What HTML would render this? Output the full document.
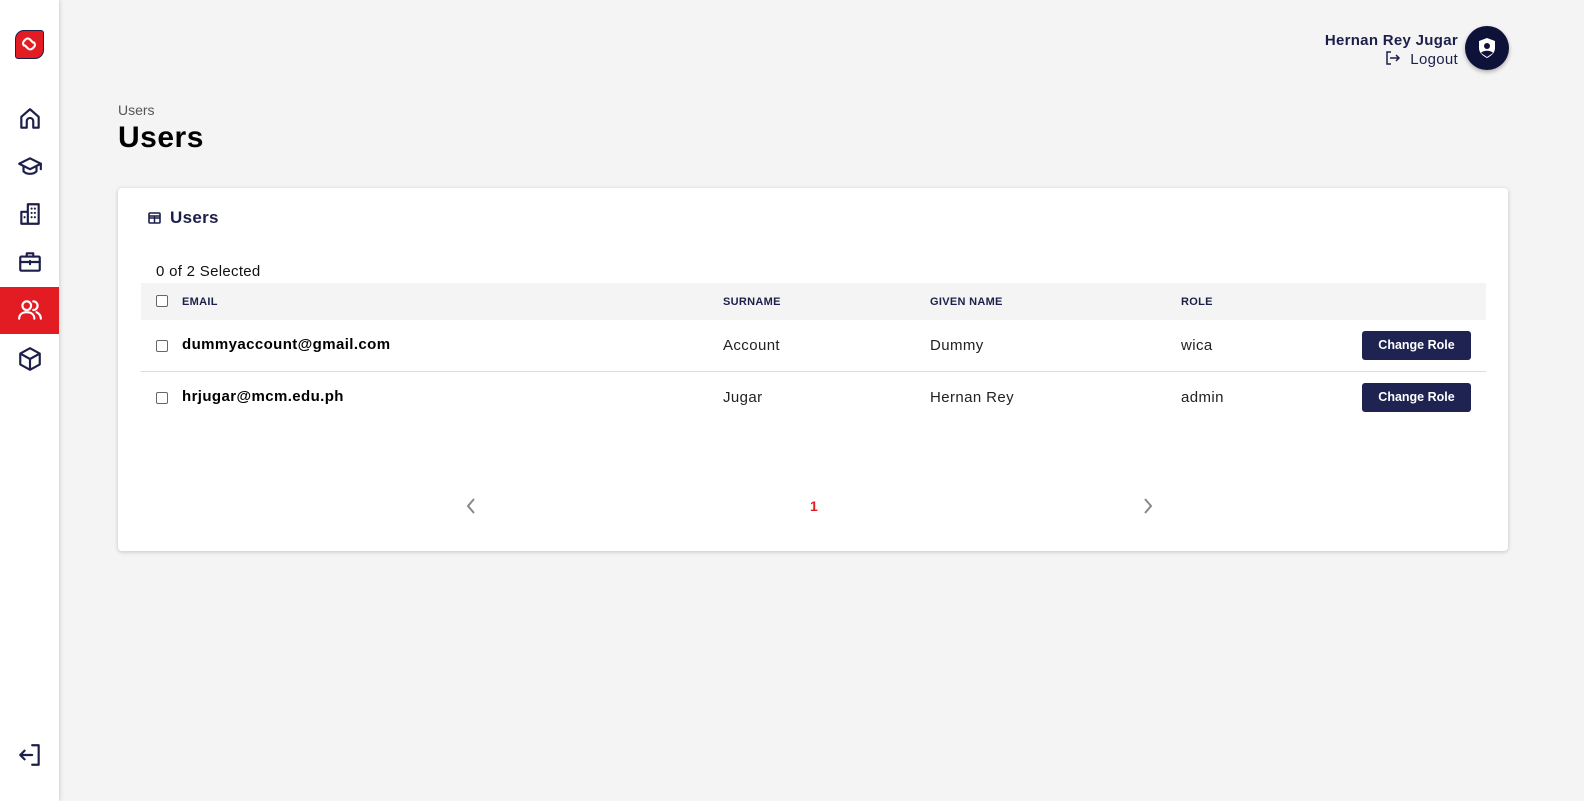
<!DOCTYPE html>
<html><head><meta charset="utf-8"><style>
*{box-sizing:border-box;margin:0;padding:0}
body{width:1584px;height:801px;background:#f4f4f4;font-family:"Liberation Sans",sans-serif;position:relative;overflow:hidden;color:#111}
.side{position:absolute;left:0;top:0;width:59px;height:801px;background:#fff;box-shadow:1px 0 4px rgba(0,0,0,.15)}
.ic{position:absolute;left:17px;width:26px;height:26px}
.ic svg{width:26px;height:26px;fill:none;stroke:#1c1f4a;stroke-width:2;stroke-linecap:round;stroke-linejoin:round}
.act{position:absolute;left:0;top:287px;width:59px;height:47px;background:#e31b23}
.card{position:absolute;left:118px;top:188px;width:1390px;height:363px;background:#fff;border-radius:4px;box-shadow:0 1px 4px rgba(0,0,0,.2)}
.th{position:absolute;top:296px;font-size:11px;font-weight:bold;color:#1c1f4a;letter-spacing:.3px}
.cb{position:absolute;left:156px;width:12px;height:12px;border:1.3px solid #666;border-radius:2px;background:#fff}
.cell{position:absolute;font-size:15px;color:#222;letter-spacing:.4px}
.btn{position:absolute;left:1362px;width:109px;height:29px;background:#1e2352;color:#fff;font-size:12.5px;font-weight:bold;border-radius:3px;text-align:center;line-height:29px}
</style></head><body>
<div class="side">
  <div style="position:absolute;left:15px;top:30px;width:29px;height:29px;background:#e31b23;border-radius:9px 3px 9px 3px;border:1.5px solid #1c1f4a"><svg width="26" height="26" viewBox="0 0 26 26" style="position:absolute;left:0;top:0"><g fill="none" stroke="#fff" stroke-width="2.2" stroke-linecap="round"><path d="M8 14.5 a3.2 3.2 0 0 1 0-4.5 l1.5-1.5 a3.2 3.2 0 0 1 4.5 0 L17 11.5"/><path d="M18 11.5 a3.2 3.2 0 0 1 0 4.5 l-1.5 1.5 a3.2 3.2 0 0 1 -4.5 0 L9 14.5"/></g></svg></div>
  <div class="ic" style="top:106px"><svg viewBox="0 0 24 24"><path d="M4 10 L12 3 L20 10 V20 H15 V14 a3 3 0 0 0 -6 0 V20 H4 Z"/></svg></div>
  <div class="ic" style="top:154px"><svg viewBox="0 0 24 24"><path d="M2 9 L12 4 L22 9 L12 14 Z"/><path d="M6 11 V16 c3 3 9 3 12 0 V11"/><path d="M22 9 V14"/></svg></div>
  <div class="ic" style="top:201px"><svg viewBox="0 0 24 24"><path d="M10 21 V3 H20 V21 Z M4 21 V10 H10 M4 21 H20"/><path d="M13.5 7h0M16.5 7h0M13.5 11h0M16.5 11h0M13.5 15h0M16.5 15h0M7 15h0"/></svg></div>
  <div class="ic" style="top:249px"><svg viewBox="0 0 24 24"><rect x="3" y="7" width="18" height="13" rx="1"/><path d="M9 7 V4 H15 V7 M3 12 H21 M12 11v3"/></svg></div>
  <div class="act"></div>
  <div class="ic" style="top:297px"><svg viewBox="0 0 24 24" style="stroke:#fff"><circle cx="9" cy="8" r="4"/><path d="M2 20 c0-4 3-6 7-6 s7 2 7 6"/><path d="M15 4 a4 4 0 0 1 0 8 M18 14 c2 1 4 3 4 6"/></svg></div>
  <div class="ic" style="top:346px"><svg viewBox="0 0 24 24"><path d="M12 2 L21 7 V17 L12 22 L3 17 V7 Z M3 7 L12 12 L21 7 M12 12 V22"/></svg></div>
  <div class="ic" style="top:742px"><svg viewBox="0 0 24 24"><path d="M14 3 H20 V21 H14 M3 12 H14 M7 8 L3 12 L7 16"/></svg></div>
</div>
<div style="position:absolute;right:126px;top:32px;font-size:15px;font-weight:bold;color:#1c1f4a;letter-spacing:.3px">Hernan Rey Jugar</div>
<div style="position:absolute;right:126px;top:50px;font-size:15px;color:#1c1f4a;letter-spacing:.3px"><svg width="16" height="16" viewBox="0 0 16 16" style="vertical-align:-2px"><path d="M6 2H2V14H6M5 8H14M11 5L14 8L11 11" fill="none" stroke="#1c1f4a" stroke-width="1.5"/></svg>&nbsp; Logout</div>
<div style="position:absolute;left:1465px;top:26px;width:44px;height:44px;border-radius:50%;background:#0f1238;box-shadow:0 2px 4px rgba(0,0,0,.3)"><svg width="44" height="44" viewBox="0 0 44 44"><path d="M22 12 L30 15 V22 c0 5-4 8-8 10 c-4-2-8-5-8-10 V15 Z" fill="#fff"/><circle cx="22" cy="20" r="3" fill="#0f1238"/><path d="M16 27 c2-3 10-3 12 0 l-6 4 Z" fill="#0f1238"/></svg></div>
<div style="position:absolute;left:118px;top:102px;font-size:14px;color:#555">Users</div>
<div style="position:absolute;left:118px;top:121px;font-size:30px;font-weight:bold;color:#000;letter-spacing:.5px">Users</div>
<div class="card"></div>
<svg style="position:absolute;left:148px;top:212px" width="13" height="12" viewBox="0 0 13 12"><rect x="1" y="1" width="11" height="10" rx="1" fill="none" stroke="#1c1f4a" stroke-width="1.6"/><path d="M1 6H12M6.5 4V11M1 4H12" stroke="#1c1f4a" stroke-width="1.5"/></svg>
<div style="position:absolute;left:170px;top:208px;font-size:17px;font-weight:bold;color:#1c1f4a;letter-spacing:.3px">Users</div>
<div style="position:absolute;left:156px;top:263px;font-size:15px;color:#111;letter-spacing:.3px">0 of 2 Selected</div>
<div style="position:absolute;left:141px;top:283px;width:1345px;height:37px;background:#f4f4f4"></div>
<div class="cb" style="top:295px"></div>
<div class="th" style="left:182px">EMAIL</div>
<div class="th" style="left:723px">SURNAME</div>
<div class="th" style="left:930px">GIVEN NAME</div>
<div class="th" style="left:1181px">ROLE</div>
<div class="cb" style="top:340px"></div>
<div class="cell" style="left:182px;top:336px;font-weight:bold;color:#000">dummyaccount@gmail.com</div>
<div class="cell" style="left:723px;top:337px">Account</div>
<div class="cell" style="left:930px;top:337px">Dummy</div>
<div class="cell" style="left:1181px;top:337px">wica</div>
<div class="btn" style="top:331px">Change Role</div>
<div style="position:absolute;left:141px;top:371px;width:1345px;height:1px;background:#ddd"></div>
<div class="cb" style="top:392px"></div>
<div class="cell" style="left:182px;top:388px;font-weight:bold;color:#000">hrjugar@mcm.edu.ph</div>
<div class="cell" style="left:723px;top:389px">Jugar</div>
<div class="cell" style="left:930px;top:389px">Hernan Rey</div>
<div class="cell" style="left:1181px;top:389px">admin</div>
<div class="btn" style="top:383px">Change Role</div>
<svg style="position:absolute;left:464px;top:497px" width="14" height="18"><path d="M10 2 L4 9 L10 16" fill="none" stroke="#888" stroke-width="2"/></svg>
<div style="position:absolute;left:810px;top:498px;font-size:14px;font-weight:bold;color:#e31b23">1</div>
<svg style="position:absolute;left:1141px;top:497px" width="14" height="18"><path d="M4 2 L10 9 L4 16" fill="none" stroke="#888" stroke-width="2"/></svg>
</body></html>
